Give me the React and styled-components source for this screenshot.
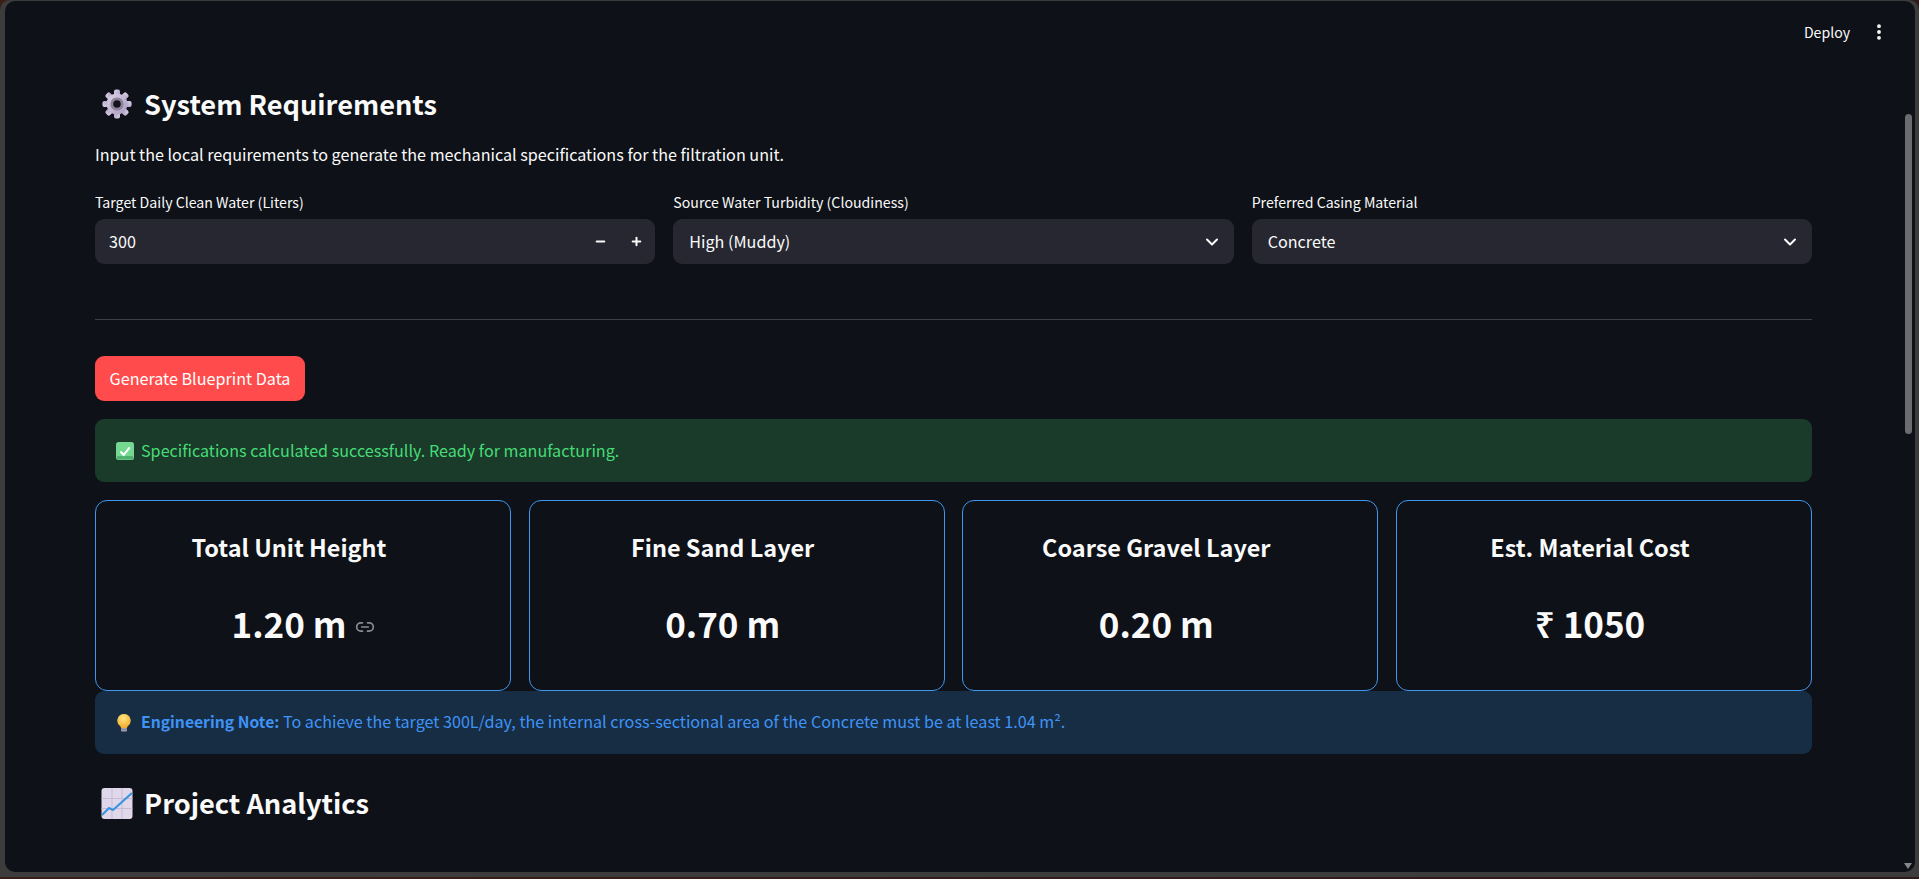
import React from 'react';
import styled, { createGlobalStyle } from 'styled-components';
import { ChevronDown, EllipsisVertical, Link2, Minus, Plus } from 'lucide-react';

const GlobalStyle = createGlobalStyle`
  html, body {
    margin: 0;
    padding: 0;
    height: 100%;
    overflow: hidden;
    background: #3a2018;
  }
  * {
    box-sizing: border-box;
  }
`;

const Desktop = styled.div`
  height: 879px;
  display: flex;
  flex-direction: column;
  background: linear-gradient(90deg, #3a1f18, #2e1a1a);
  font-family: 'Noto Sans CJK SC', 'Noto Sans', sans-serif;
  color: #fafafa;
`;

const WindowFrame = styled.div`
  height: 877px;
  padding: 1px 4px 5px 5px;
  background: #3c3c3c;
  border-radius: 10px 10px 0 0;
`;

const Viewport = styled.div`
  position: relative;
  height: 100%;
  background: #0e1117;
  border-radius: 10px;
  overflow: hidden;
`;

const Header = styled.header`
  height: 62px;
  padding-right: 26px;
  display: flex;
  align-items: center;
  justify-content: flex-end;
  gap: 19px;
`;

const DeployLabel = styled.span`
  font-size: 14.1px;
  line-height: 20px;
`;

const Main = styled.main`
  padding: 19px 103px 0 90px;
`;

const SectionTitle = styled.h3`
  margin: 0;
  height: 44px;
  padding: 0 0 2px 6px;
  display: flex;
  align-items: center;
  gap: 11px;
  font-size: 27.2px;
  line-height: 42px;
  font-weight: 600;

  svg {
    margin-top: 2px;
  }
`;

const Description = styled.p`
  margin: 14px 0 0;
  font-size: 16.15px;
  line-height: 28px;
`;

const FieldRow = styled.div`
  margin-top: 24px;
  display: grid;
  grid-template-columns: repeat(3, 1fr);
  gap: 18px;
`;

const Field = styled.div`
  display: flex;
  flex-direction: column;
  gap: 7px;
`;

const FieldLabel = styled.label`
  font-size: 14.15px;
  line-height: 20px;
`;

const Control = styled.div`
  height: 45px;
  padding: 0 ${(p) => (p.$select ? '12px' : '10px')} 2px ${(p) => (p.$select ? '16px' : '14px')};
  display: flex;
  align-items: center;
  justify-content: space-between;
  background: #262730;
  border-radius: 9px;
  font-size: 16.15px;
  line-height: 22px;

  svg {
    margin-top: 2px;
  }
`;

const Steppers = styled.div`
  display: flex;
  gap: 23px;
  align-items: center;
  padding-right: 2px;
`;

const Divider = styled.hr`
  margin: 55px 0 36px;
  border: 0;
  height: 1px;
  background: #3d4044;
`;

const PrimaryButton = styled.button`
  display: block;
  width: 210px;
  height: 45px;
  padding: 0 0 2px;
  border: 0;
  border-radius: 9px;
  background: #ff4b4b;
  color: #fff;
  font-family: inherit;
  font-size: 16.15px;
  line-height: 20px;
`;

const Alert = styled.div`
  height: 63px;
  padding: 0 ${(p) => (p.$tone === 'info' ? '22px' : '21px')} 2px;
  display: flex;
  align-items: center;
  gap: ${(p) => (p.$tone === 'info' ? '10px' : '7px')};
  border-radius: 9px;
  font-size: 16.15px;
  line-height: 26px;
  background: ${(p) => (p.$tone === 'info' ? '#172d43' : '#1a3a2a')};
  color: ${(p) => (p.$tone === 'info' ? '#3f93f7' : '#46dc76')};

  strong {
    font-size: 15.7px;
    font-weight: 600;
  }

  svg {
    margin-top: 2px;
  }
`;

const SuccessAlert = styled(Alert)`
  margin-top: 18px;
`;

const MetricGrid = styled.div`
  margin-top: 18px;
  display: grid;
  grid-template-columns: repeat(4, 1fr);
  gap: 17.6px;
`;

const MetricCard = styled.div`
  height: 191px;
  padding-top: 29px;
  border: 1px solid #4096ee;
  border-radius: 12px;
  text-align: center;
`;

const MetricTitle = styled.h4`
  margin: 0;
  padding-right: 28px;
  font-size: 23.45px;
  line-height: 34px;
  font-weight: 600;
`;

const MetricValue = styled.h2`
  margin: 35px 0 0;
  display: flex;
  align-items: center;
  justify-content: center;
  gap: 8px;
  font-size: 35px;
  line-height: 48px;
  font-weight: 600;

  svg {
    color: #8a8c90;
    margin-top: 7px;
    visibility: ${(p) => (p.$anchor ? 'visible' : 'hidden')};
  }
`;

const AnalyticsTitle = styled(SectionTitle)`
  margin-top: 27px;
`;

const ScrollThumb = styled.div`
  position: absolute;
  top: 113px;
  right: 3px;
  width: 7px;
  height: 320px;
  border-radius: 4px;
  background: #6a6c70;
`;

const ScrollArrow = styled.div`
  position: absolute;
  right: 3px;
  bottom: 3px;
  width: 0;
  height: 0;
  border-left: 4px solid transparent;
  border-right: 4px solid transparent;
  border-top: 6px solid #85878a;
`;

const GearEmoji = () => (
  <svg width="32" height="30" viewBox="0 0 32 30" aria-hidden="true">
    <defs>
      <linearGradient id="gearFill" x1="0" y1="0" x2="1" y2="1">
        <stop offset="0" stopColor="#dcd3e8" />
        <stop offset="1" stopColor="#a99bc0" />
      </linearGradient>
    </defs>
    <g fill="url(#gearFill)" transform="translate(16 15)">
      {[0, 45, 90, 135, 180, 225, 270, 315].map((a) => (
        <rect key={a} x="-3" y="-14.6" width="6" height="7" rx="2" transform={`rotate(${a})`} />
      ))}
      <circle r="10.5" />
    </g>
    <circle cx="16" cy="15" r="6.6" fill="#8d8499" />
    <circle cx="16" cy="15" r="3.8" fill="#15141c" />
  </svg>
);

const ChartEmoji = () => (
  <svg width="32" height="31" viewBox="0 0 32 31" aria-hidden="true">
    <rect x="0.5" y="0" width="31" height="31" rx="3" fill="#e0d8ea" />
    <path d="M11 0v31M21 0v31M0.5 10.5h31M0.5 20.5h31" stroke="#c5bbd2" strokeWidth="1" fill="none" />
    <path d="M1 27l7-7 4 2L31 5" stroke="#3b94e2" strokeWidth="2.2" fill="none" />
  </svg>
);

const CheckEmoji = () => (
  <svg width="18" height="18" viewBox="0 0 18 18" aria-hidden="true">
    <rect width="18" height="18" rx="2.5" fill="#74d892" />
    <rect x="0.5" y="14" width="17" height="3.5" rx="1.5" fill="#4fb06f" />
    <path d="M4.5 9.5l3.2 3.4 6-7.6" stroke="#fff" strokeWidth="2" fill="none" />
  </svg>
);

const BulbEmoji = () => (
  <svg width="14" height="18" viewBox="0 0 14 18" aria-hidden="true">
    <defs>
      <radialGradient id="bulbFill" cx="0.45" cy="0.3" r="0.7">
        <stop offset="0" stopColor="#ffe680" />
        <stop offset="1" stopColor="#f0a92e" />
      </radialGradient>
    </defs>
    <path d="M7 0a6.6 6.6 0 0 0-4 11.9c.7.6 1 1.2 1 2.1h6c0-.9.3-1.5 1-2.1A6.6 6.6 0 0 0 7 0z" fill="url(#bulbFill)" />
    <rect x="4" y="14" width="6" height="3.4" rx="1" fill="#a49fb0" />
    <path d="M4.4 15.6h5.2" stroke="#77727f" strokeWidth="0.7" />
  </svg>
);

const metrics = [
  { title: 'Total Unit Height', value: '1.20 m', anchor: true },
  { title: 'Fine Sand Layer', value: '0.70 m' },
  { title: 'Coarse Gravel Layer', value: '0.20 m' },
  { title: 'Est. Material Cost', value: '₹ 1050' },
];

export default function App() {
  return (
    <>
      <GlobalStyle />
      <Desktop>
        <WindowFrame>
          <Viewport>
            <Header>
              <DeployLabel>Deploy</DeployLabel>
              <EllipsisVertical size={20} strokeWidth={2.6} />
            </Header>
            <Main>
              <SectionTitle>
                <GearEmoji />
                System Requirements
              </SectionTitle>
              <Description>
                Input the local requirements to generate the mechanical specifications for the filtration unit.
              </Description>
              <FieldRow>
                <Field>
                  <FieldLabel>Target Daily Clean Water (Liters)</FieldLabel>
                  <Control>
                    300
                    <Steppers>
                      <Minus size={13} strokeWidth={3.8} />
                      <Plus size={13} strokeWidth={3.8} />
                    </Steppers>
                  </Control>
                </Field>
                <Field>
                  <FieldLabel>Source Water Turbidity (Cloudiness)</FieldLabel>
                  <Control $select>
                    High (Muddy)
                    <ChevronDown size={20} strokeWidth={2.4} />
                  </Control>
                </Field>
                <Field>
                  <FieldLabel>Preferred Casing Material</FieldLabel>
                  <Control $select>
                    Concrete
                    <ChevronDown size={20} strokeWidth={2.4} />
                  </Control>
                </Field>
              </FieldRow>
              <Divider />
              <PrimaryButton>Generate Blueprint Data</PrimaryButton>
              <SuccessAlert>
                <CheckEmoji />
                Specifications calculated successfully. Ready for manufacturing.
              </SuccessAlert>
              <MetricGrid>
                {metrics.map((m) => (
                  <MetricCard key={m.title}>
                    <MetricTitle>{m.title}</MetricTitle>
                    <MetricValue $anchor={m.anchor}>
                      {m.value}
                      <Link2 size={20} strokeWidth={2} />
                    </MetricValue>
                  </MetricCard>
                ))}
              </MetricGrid>
              <Alert $tone="info">
                <BulbEmoji />
                <span>
                  <strong>Engineering Note:</strong>{' '}
                  To achieve the target 300L/day, the internal cross-sectional area of the Concrete must be at least 1.04 m².
                </span>
              </Alert>
              <AnalyticsTitle>
                <ChartEmoji />
                Project Analytics
              </AnalyticsTitle>
            </Main>
            <ScrollThumb />
            <ScrollArrow />
          </Viewport>
        </WindowFrame>
      </Desktop>
    </>
  );
}
